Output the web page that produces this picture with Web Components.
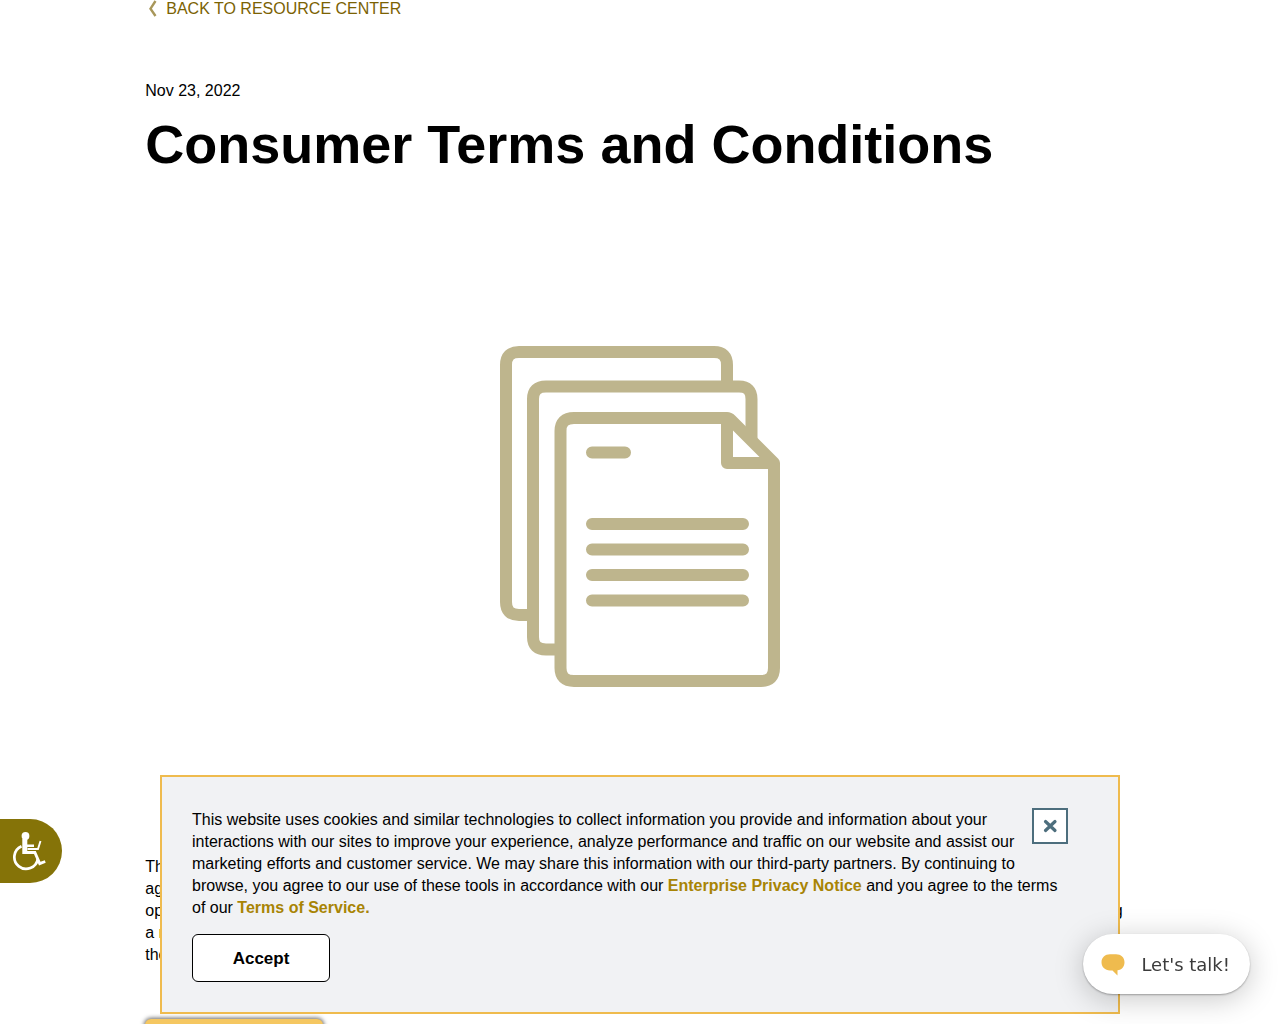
<!DOCTYPE html>
<html lang="en">
<head>
<meta charset="utf-8">
<title>Consumer Terms and Conditions</title>
<style>
html, body { margin: 0; background: #fff; }
body { font: 16px/22px "Liberation Sans", Arial, sans-serif; color: #000; height: 100vh; overflow: hidden; }
</style>
</head>
<body>
<resource-article>
  <back-link slot="back">BACK TO RESOURCE CENTER</back-link>
  <time slot="date" datetime="2022-11-23">Nov 23, 2022</time>
  <span slot="title">Consumer Terms and Conditions</span>
  <documents-picture slot="picture"></documents-picture>
  <article-intro slot="intro"></article-intro>
  <action-button slot="action"></action-button>
</resource-article>
<cookie-notice></cookie-notice>
<accessibility-tab></accessibility-tab>
<chat-launcher>Let's talk!</chat-launcher>

<script>
function define(name, markup) {
  const template = document.createElement('template');
  template.innerHTML = markup;
  customElements.define(name, class extends HTMLElement {
    constructor() {
      super();
      this.attachShadow({ mode: 'open' }).append(template.content.cloneNode(true));
    }
  });
}

define('back-link', `
<style>
:host { display: flex; }
a { display: flex; align-items: center; gap: 9px; padding-left: 3px; color: #7b6203; text-decoration: none; line-height: 18px; }
svg { width: 9px; height: 18px; }
</style>
<a href="#"><svg viewBox="0 0 9 18" aria-hidden="true"><path d="M7.500 1 2.500 8.700l5 7.300" fill="none" stroke="#a8975a" stroke-width="2.400"/></svg><slot></slot></a>`);

define('documents-picture', `
<style>
:host { display: flex; justify-content: center; }
svg { width: 330px; height: 380px; }
</style>
<svg viewBox="475 320 330 380" role="img" aria-label="Documents" fill="none" stroke="#beb58d" stroke-width="12" stroke-linecap="round">
<path stroke-linecap="butt" d="M727 382V365Q727 352 714 352H519Q506 352 506 365V602Q506 615 519 615H529"/>
<path stroke-linecap="butt" d="M751.500 440V399Q751.500 386.500 739 386.500H546Q533 386.500 533 399V637Q533 649.500 546 649.500H556"/>
<path d="M727 418H574Q560.500 418 560.500 431V668Q560.500 681 574 681H761Q774 681 774 668V463L731 420Q729 418 727 418V463H774" stroke-linejoin="round"/>
<path d="M592 452.500H625M592 524H743M592 549.500H743M592 575H743M592 600.500H743"/>
</svg>`);

define('article-intro', `
<style>
:host { display: flex; flex-direction: column; align-items: flex-start; padding-right: 12px; }
.wide { align-self: stretch; display: flex; justify-content: space-between; }
a { color: #a88404; text-decoration: none; }
</style>
<span>Th</span><span>ag</span><div class="wide"><span>op</span><span>g</span></div><span>a <a href="#">r</a></span><span>the</span>`);

define('action-button', `
<style>
:host { display: flex; }
button { width: 178px; height: 48px; border: 0; border-radius: 6px; background: #f5c761; box-shadow: 0 0 4px 1px rgba(0,0,0,.6); }
</style>
<button type="button" aria-label="Continue"></button>`);

define('resource-article', `
<style>
:host { display: block; padding: 0 11.35%; }
main { display: flex; flex-direction: column; }
.date { margin-top: 62px; }
h1 { margin: 8px 0 0; font-size: 54px; line-height: 68px; font-weight: 700; }
.picture { margin-top: 142px; }
.intro { margin-top: 156px; }
.action { margin-top: 53px; }
</style>
<main>
<slot name="back"></slot>
<div class="date"><slot name="date"></slot></div>
<h1><slot name="title"></slot></h1>
<div class="picture"><slot name="picture"></slot></div>
<div class="intro"><slot name="intro"></slot></div>
<div class="action"><slot name="action"></slot></div>
</main>`);

define('cookie-notice', `
<style>
:host { position: fixed; left: 12.5%; right: 12.5%; bottom: 10px; display: block; box-sizing: border-box; padding: 31px 50px 30px 30px; background: #f1f2f4; border: 2px solid #efbb4e; }
p { margin: 0; padding-top: 1px; }
a { color: #a88404; font-weight: 700; text-decoration: none; }
.close { float: right; width: 36px; height: 36px; margin-left: 8px; padding: 0; border: 2px solid #4d6e7d; background: #fff; display: flex; align-items: center; justify-content: center; }
.accept { display: block; width: 138px; height: 48px; margin-top: 15px; padding: 2px 0 0; border: 1px solid #000; border-radius: 6px; background: #fff; font: 700 17px/22px "Liberation Sans", Arial, sans-serif; color: #000; }
</style>
<button class="close" type="button" aria-label="Close"><svg width="16" height="16" viewBox="0 0 16 16"><path d="M3.500 3.500l9.500 9M13 3.500l-9.500 9" fill="none" stroke="#4d6e7d" stroke-width="3.200" stroke-linecap="round"/></svg></button>
<p>This website uses cookies and similar technologies to collect information you provide and information about your interactions with our sites to improve your experience, analyze performance and traffic on our website and assist our marketing efforts and customer service. We may share this information with our third-party partners. By continuing to browse, you agree to our use of these tools in accordance with our <a href="#">Enterprise Privacy Notice</a> and you agree to the terms of our <a href="#">Terms of Service.</a></p>
<button class="accept" type="button">Accept</button>`);

define('accessibility-tab', `
<style>
:host { position: fixed; left: 0; bottom: 141px; display: block; }
button { display: flex; align-items: center; width: 62px; height: 64px; padding: 0 0 0 12px; border: 0; border-radius: 0 32px 32px 0; background: #857308; }
</style>
<button type="button" aria-label="Accessibility"><svg width="36" height="40" viewBox="12 831 36 40" fill="none" stroke="#fff">
<circle cx="25.500" cy="836" r="3.900" fill="#fff" stroke="none"/>
<path d="M22.300 839h5v5.500h6.700v2.500h-6.700v4h8.500l4.700 10.700 4.300-1.500.9 2.500-6.700 2.800-5-11.500H22.300z" fill="#fff" stroke="none"/>
<path d="M27.500 849h10.500L40.500 841" stroke-width="1.900"/>
<path d="M21.500 846.200A11.800 11.800 0 1 0 37.800 859" stroke-width="2.700"/>
</svg></button>`);

define('chat-launcher', `
<style>
:host { position: fixed; right: 30px; bottom: 30px; display: block; }
button { display: flex; align-items: center; gap: 16px; height: 60px; padding: 2px 20px 0 18px; border: 0; border-radius: 30px; background: #fff; box-shadow: 0 1px 2px rgba(0,0,0,.3), 0 5px 30px rgba(0,0,0,.22); font: 18px/24px "DejaVu Sans", sans-serif; color: #3b3b3b; white-space: nowrap; }
</style>
<button type="button"><svg width="24" height="22" viewBox="0 0 24 22" aria-hidden="true"><path d="M9 .3h6c5 0 8.500 3.200 8.500 8 0 4.500-2.500 7.400-7 8V21.500l-5-5H9C4 16.500.5 13 .5 8.300S4 .3 9 .3z" fill="#efbb4e"/></svg><slot></slot></button>`);
</script>
</body>
</html>
